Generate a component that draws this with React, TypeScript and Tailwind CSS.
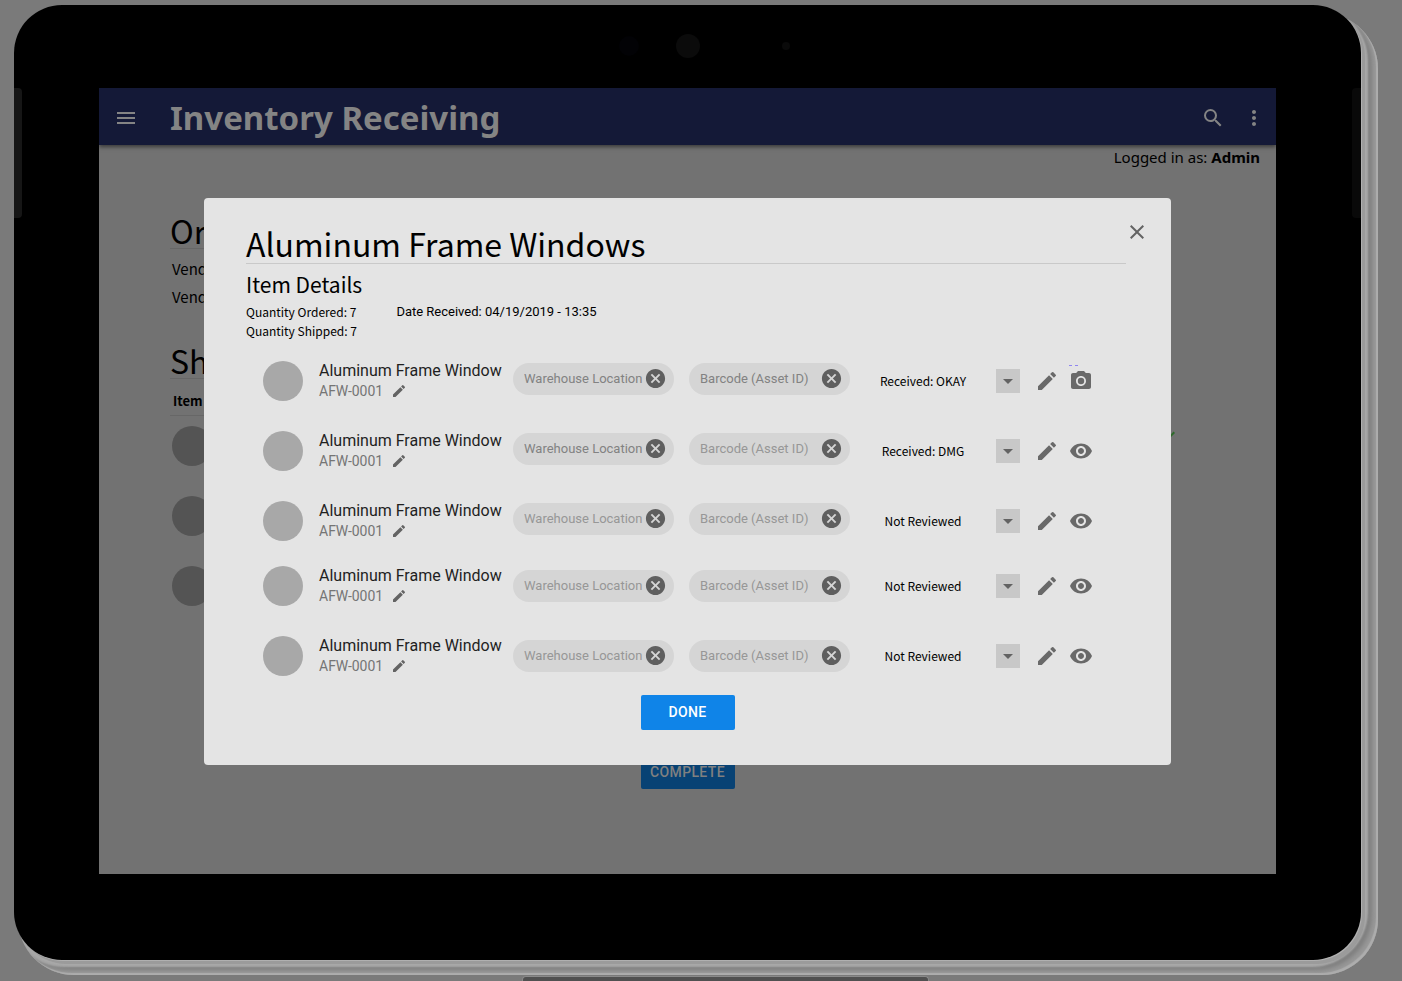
import React from "react";
import {
  MdArrowDropDown,
  MdCancel,
  MdCheck,
  MdClose,
  MdEdit,
  MdMenu,
  MdMoreVert,
  MdPhotoCamera,
  MdRemoveRedEye,
  MdSearch,
} from "react-icons/md";

type Item = {
  id: number;
  status: string;
  action: "camera" | "view";
  locationTone: string;
  barcodeTone: string;
};

const DARK = "placeholder:text-[#828282]";
const LIGHT = "placeholder:text-[#979797]";

const FIRST_BATCH: Item[] = [
  { id: 1, status: "Received: OKAY", action: "camera", locationTone: DARK, barcodeTone: DARK },
  { id: 2, status: "Received: DMG", action: "view", locationTone: DARK, barcodeTone: LIGHT },
  { id: 3, status: "Not Reviewed", action: "view", locationTone: LIGHT, barcodeTone: LIGHT },
];

const SECOND_BATCH: Item[] = [
  { id: 4, status: "Not Reviewed", action: "view", locationTone: LIGHT, barcodeTone: LIGHT },
  { id: 5, status: "Not Reviewed", action: "view", locationTone: LIGHT, barcodeTone: LIGHT },
];

const STATUSES = ["Received: OKAY", "Received: DMG", "Not Reviewed"];

function PillField({ label, tone }: { label: string; tone: string }) {
  return (
    <div className="flex h-8 w-[161px] shrink-0 items-center rounded-full bg-[#d5d5d5] pr-[7px] pl-[11px]">
      <input
        aria-label={label}
        placeholder={label}
        className={`min-w-0 flex-1 bg-transparent font-['Roboto',sans-serif] text-[13px] leading-4 text-[#555] outline-none placeholder:opacity-100 ${tone}`}
      />
      <button type="button" aria-label={`Clear ${label}`} className="shrink-0 text-[#5f5f5f]">
        <MdCancel className="size-[23px]" />
      </button>
    </div>
  );
}

function ItemRow({ item, fieldsClass }: { item: Item; fieldsClass: string }) {
  return (
    <li className="flex h-10 items-center">
      <span className="size-10 shrink-0 rounded-full bg-[#a8a8a8]" />
      <div className="ml-4 min-w-0 flex-1 font-['Roboto',sans-serif]">
        <div className="text-base leading-5 whitespace-nowrap text-[#1f1f1f]">Aluminum Frame Window</div>
        <div className="flex items-center gap-2 text-sm leading-5 text-[#757575]">
          AFW-0001
          <button type="button" aria-label="Edit code" className="text-[#636363]">
            <MdEdit className="size-4" />
          </button>
        </div>
      </div>
      <div className={`flex shrink-0 gap-[15px] ${fieldsClass}`}>
        <PillField label="Warehouse Location" tone={item.locationTone} />
        <PillField label="Barcode (Asset ID)" tone={item.barcodeTone} />
      </div>
      <div className="relative flex w-[170px] shrink-0 items-center">
        <select
          aria-label="Review status"
          defaultValue={item.status}
          className="h-6 w-full appearance-none bg-transparent pr-6 text-center text-xs leading-6 text-black"
        >
          {STATUSES.map((s) => (
            <option key={s}>{s}</option>
          ))}
        </select>
        <span className="pointer-events-none absolute right-0 flex size-6 items-center justify-center bg-[#c8c8c8] text-[#636363]">
          <MdArrowDropDown className="size-6" />
        </span>
      </div>
      <button type="button" aria-label="Edit item" className="ml-[15px] shrink-0 text-[#696969]">
        <MdEdit className="size-6" />
      </button>
      <button
        type="button"
        aria-label={item.action === "camera" ? "Take photo" : "View item"}
        className="relative ml-[10px] shrink-0 text-[#696969]"
      >
        {item.action === "camera" ? (
          <>
            <span className="absolute -top-1 left-0 w-[9px] border-t border-dashed border-[#8f86f0]" />
            <MdPhotoCamera className="size-6" />
          </>
        ) : (
          <MdRemoveRedEye className="size-6" />
        )}
      </button>
    </li>
  );
}

function ItemDialog() {
  return (
    <section
      role="dialog"
      aria-labelledby="dialog-title"
      className="flex w-full flex-col rounded-[4px] bg-[#e4e4e4] pt-6 pb-[35px] text-black"
    >
      <header className="flex items-start pr-[22px] pl-[42px]">
        <h2 id="dialog-title" className="flex-1 border-b border-[#c9c9c9] pt-px text-[32px] leading-10">
          Aluminum Frame Windows
        </h2>
        <button type="button" aria-label="Close" className="-mt-[2px] -ml-px text-[#636363]">
          <MdClose className="size-6" />
        </button>
      </header>
      <div className="px-[42px]">
        <h3 className="pt-1 text-[21px] leading-8">Item Details</h3>
        <div className="pt-[2px] text-xs leading-[19px]">
          <div className="flex gap-10">
            <p>Quantity Ordered: 7</p>
            <p className="font-['Roboto',sans-serif] text-[13px] leading-[19px]">
              Date Received: 04/19/2019 - 13:35
            </p>
          </div>
          <p>Quantity Shipped: 7</p>
        </div>
      </div>
      <div className="flex flex-col gap-[25px] pt-[21px] pr-[78px] pl-[59px]">
        <ul className="flex flex-col gap-[30px]">
          {FIRST_BATCH.map((i) => (
            <ItemRow key={i.id} item={i} fieldsClass="mb-1" />
          ))}
        </ul>
        <ul className="flex flex-col gap-[30px]">
          {SECOND_BATCH.map((i) => (
            <ItemRow key={i.id} item={i} fieldsClass="mb-0" />
          ))}
        </ul>
      </div>
      <button
        type="button"
        className="mt-[19px] h-[35px] w-[94px] self-center rounded-[2px] bg-[#0f84e8] font-['Roboto',sans-serif] text-sm font-medium tracking-wide text-white"
      >
        DONE
      </button>
    </section>
  );
}

export default function App() {
  return (
    <div className="relative flex min-h-screen flex-col bg-[#7a7a7a] pt-[5px] pr-6 pb-[6px] pl-[14px] font-['Noto_Sans_CJK_SC',sans-serif]">
      <div className="relative flex flex-1 flex-col pr-[17px] pb-[15px]">
        <span className="absolute top-2 right-0 bottom-0 left-1 rounded-[56px] bg-[#a8a8a8] shadow-[inset_-2px_-2px_1px_#adadad,inset_-6px_-5px_4px_#989898,inset_-10px_-8px_2px_#7f7f7f]" />
        <div className="relative flex flex-1 flex-col rounded-[48px] bg-black px-[85px] pt-[83px] pb-[86px] shadow-[1px_1px_0_#b0b0b0,4px_4px_0_#9b9b9b]">
          <span className="absolute top-[83px] left-0 h-[130px] w-2 rounded-r-[4px] bg-[#161616]" />
          <span className="absolute top-[83px] right-0 h-[130px] w-[9px] rounded-l-[4px] bg-[#090909]" />
          <div className="absolute inset-x-0 top-[29px] grid grid-cols-[1fr_auto_1fr] items-center">
            <span className="mr-[37px] size-5 justify-self-end rounded-full bg-[#020205]" />
            <span className="size-6 rounded-full bg-[#0b0b0b]" />
            <span className="ml-[82px] size-2 rounded-full bg-[#0a0a0a]" />
          </div>

          <main className="relative flex flex-1 flex-col bg-[#727272]">
            <header className="relative flex h-[57px] items-center bg-[#141937] pt-[3px] pr-4 pl-[15px] text-[#848484] shadow-[0_2px_4px_rgba(0,0,0,0.5)]">
              <button type="button" aria-label="Menu">
                <MdMenu className="size-6" />
              </button>
              <h1 className="ml-8 flex-1 font-['Noto_Sans',sans-serif] text-[33px] leading-10 font-bold">
                Inventory Receiving
              </h1>
              <button type="button" aria-label="Search">
                <MdSearch className="size-6" />
              </button>
              <button type="button" aria-label="More" className="-mr-[6px] ml-[17px]">
                <MdMoreVert className="size-6" />
              </button>
            </header>
            <p className="pr-4 text-right font-['Noto_Sans',sans-serif] text-[15px] leading-6 text-black">
              Logged in as: <b>Admin</b>
            </p>
            <div className="flex flex-col pr-[110px] pl-[71px] text-black">
              <h2 className="mt-[43px] border-b border-[#676767] text-[32px] leading-9">Ord</h2>
              <p className="mt-[6px] pl-[2px] text-[15px] leading-7">Vend</p>
              <p className="pl-[2px] text-[15px] leading-7">Vend</p>
              <h2 className="mt-[31px] border-b border-[#676767] text-[32px] leading-9">Ship</h2>
              <h3 className="mt-3 border-b border-[#676767] pb-1 pl-[3px] text-[13px] leading-5 font-bold">
                Item
              </h3>
              <ul className="mt-[10px] -mr-3 flex flex-col gap-[30px] pl-[2px]">
                <li className="flex justify-between">
                  <span className="size-10 rounded-full bg-[#545454]" />
                  <MdCheck className="size-6 text-[#2f6b2c]" />
                </li>
                <li className="size-10 rounded-full bg-[#545454]" />
                <li className="size-10 rounded-full bg-[#545454]" />
              </ul>
            </div>
            <button
              type="button"
              className="mt-auto mb-[85px] h-[35px] w-[94px] self-center rounded-[2px] bg-[#084274] font-['Roboto',sans-serif] text-sm font-medium tracking-wide text-[#808080]"
            >
              COMPLETE
            </button>
            <div className="absolute inset-0 flex items-center px-[105px]">
              <ItemDialog />
            </div>
          </main>
        </div>
      </div>
      <span className="absolute bottom-0 left-[522px] h-[5px] w-[407px] rounded-t-[4px] border border-b-0 border-[#8a8a8a] bg-[#505050]" />
    </div>
  );
}
